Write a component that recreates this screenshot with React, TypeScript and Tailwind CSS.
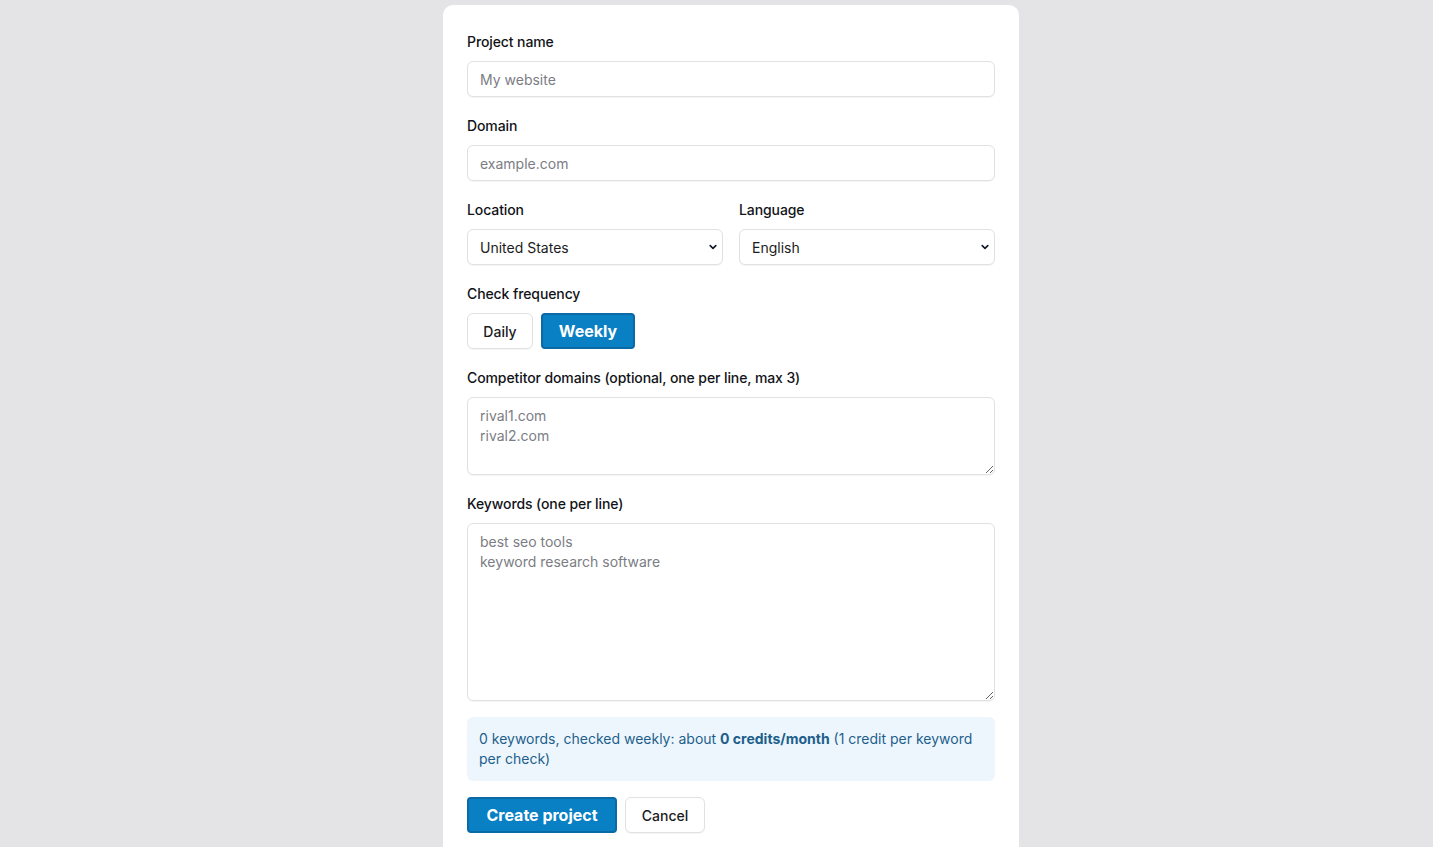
import React from "react";

const Chevron = () => (
  <svg width="10" height="10" viewBox="0 0 10 10" className="absolute right-[4px] top-1/2 -translate-y-1/2 pointer-events-none">
    <path d="M2.2 3.6 L5 6.4 L7.8 3.6" fill="none" stroke="#111827" strokeWidth="1.6" strokeLinecap="round" strokeLinejoin="round" />
  </svg>
);

export default function App() {
  const font = { fontFamily: 'Inter, "Liberation Sans", sans-serif' };
  const label = "block text-[14px] leading-5 font-medium text-[#111318] mb-[9px] tracking-[-0.1px]";
  const input =
    "w-full h-9 rounded-[6px] border border-[#e1e1e4] bg-white px-3 text-[14px] text-[#1f2937] placeholder:text-[#7b7d84] shadow-[0_1px_1px_rgba(0,0,0,0.04)] outline-none";
  return (
    <div className="min-h-[847px] bg-[#e4e4e7] flex justify-center pt-[5px] pl-[29px]" style={font}>
      <div className="w-[576px] bg-white rounded-t-[10px] px-6 pt-[27px] pb-6">
        <div className="mb-[19px]">
          <label className={label}>Project name</label>
          <input className={input} placeholder="My website" />
        </div>
        <div className="mb-[19px]">
          <label className={label}>Domain</label>
          <input className={input} placeholder="example.com" />
        </div>
        <div className="mb-[19px] grid grid-cols-2 gap-4">
          <div>
            <label className={label}>Location</label>
            <div className="relative h-9 rounded-[6px] border border-[#e1e1e4] bg-white px-3 flex items-center text-[14px] text-[#1a1c22] shadow-[0_1px_1px_rgba(0,0,0,0.04)]">
              United States
              <Chevron />
            </div>
          </div>
          <div>
            <label className={label}>Language</label>
            <div className="relative h-9 rounded-[6px] border border-[#e1e1e4] bg-white px-3 flex items-center text-[14px] text-[#1a1c22] shadow-[0_1px_1px_rgba(0,0,0,0.04)]">
              English
              <Chevron />
            </div>
          </div>
        </div>
        <div className="mb-[19px]">
          <label className={label}>Check frequency</label>
          <div className="flex gap-2">
            <button className="h-9 w-[66px] rounded-[6px] border border-[#e1e1e4] bg-white text-[14px] font-medium text-[#1a1c22] shadow-[0_1px_1px_rgba(0,0,0,0.04)]">
              Daily
            </button>
            <button className="h-9 w-[94px] rounded-[4px] border-2 border-[#0b6aa5] bg-[#0a80c4] text-[16px] font-bold text-white">
              Weekly
            </button>
          </div>
        </div>
        <div className="mb-[19px]">
          <label className={label}>Competitor domains (optional, one per line, max 3)</label>
          <textarea
            className="block w-full h-[78px] rounded-[6px] border border-[#e1e1e4] bg-white px-3 py-[8px] text-[14px] leading-5 text-[#1f2937] placeholder:text-[#7b7d84] shadow-[0_1px_1px_rgba(0,0,0,0.04)] outline-none"
            placeholder={"rival1.com\nrival2.com"}
          />
        </div>
        <div className="mb-4">
          <label className={label}>Keywords (one per line)</label>
          <textarea
            className="block w-full h-[178px] rounded-[6px] border border-[#e1e1e4] bg-white px-3 py-[8px] text-[14px] leading-5 text-[#1f2937] placeholder:text-[#7b7d84] shadow-[0_1px_1px_rgba(0,0,0,0.04)] outline-none"
            placeholder={"best seo tools\nkeyword research software"}
          />
        </div>
        <p className="mb-4 rounded-[6px] bg-[#eef6fd] px-3 py-3 text-[14px] leading-5 text-[#1d5f8c]">
          0 keywords, checked weekly: about <b className="font-bold">0 credits/month</b> (1 credit per keyword per check)
        </p>
        <div className="flex gap-2">
          <button className="h-9 w-[150px] rounded-[4px] border-2 border-[#0b6aa5] bg-[#0a80c4] text-[16px] font-bold text-white">
            Create project
          </button>
          <button className="h-9 w-[80px] rounded-[6px] border border-[#e1e1e4] bg-white text-[14px] font-medium text-[#1a1c22] shadow-[0_1px_1px_rgba(0,0,0,0.04)]">
            Cancel
          </button>
        </div>
      </div>
    </div>
  );
}
